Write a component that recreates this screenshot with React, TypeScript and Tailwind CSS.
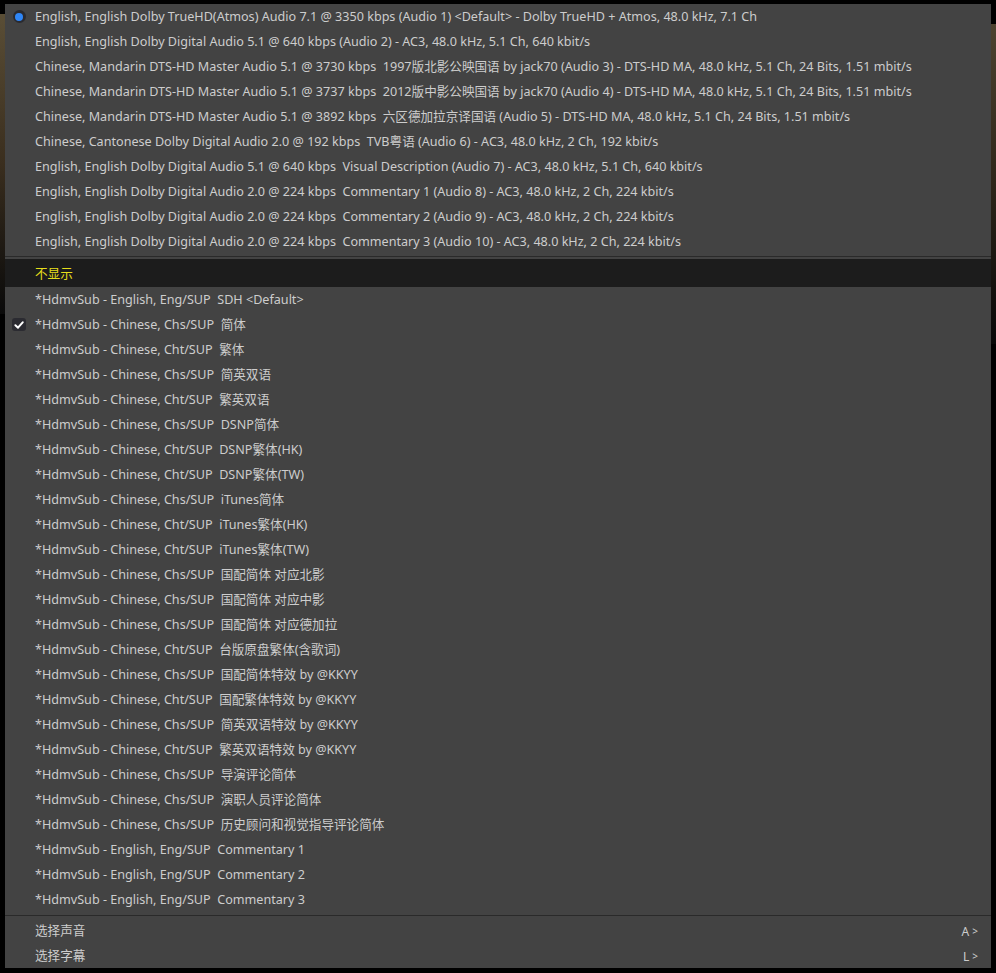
import React from "react";

type Track = {
  label: string;
  selected?: boolean;
};

const audioTracks: Track[] = [
  { label: "English, English Dolby TrueHD(Atmos) Audio 7.1 @ 3350 kbps (Audio 1) <Default> - Dolby TrueHD + Atmos, 48.0 kHz, 7.1 Ch", selected: true },
  { label: "English, English Dolby Digital Audio 5.1 @ 640 kbps (Audio 2) - AC3, 48.0 kHz, 5.1 Ch, 640 kbit/s" },
  { label: "Chinese, Mandarin DTS-HD Master Audio 5.1 @ 3730 kbps  1997版北影公映国语 by jack70 (Audio 3) - DTS-HD MA, 48.0 kHz, 5.1 Ch, 24 Bits, 1.51 mbit/s" },
  { label: "Chinese, Mandarin DTS-HD Master Audio 5.1 @ 3737 kbps  2012版中影公映国语 by jack70 (Audio 4) - DTS-HD MA, 48.0 kHz, 5.1 Ch, 24 Bits, 1.51 mbit/s" },
  { label: "Chinese, Mandarin DTS-HD Master Audio 5.1 @ 3892 kbps  六区德加拉京译国语 (Audio 5) - DTS-HD MA, 48.0 kHz, 5.1 Ch, 24 Bits, 1.51 mbit/s" },
  { label: "Chinese, Cantonese Dolby Digital Audio 2.0 @ 192 kbps  TVB粤语 (Audio 6) - AC3, 48.0 kHz, 2 Ch, 192 kbit/s" },
  { label: "English, English Dolby Digital Audio 5.1 @ 640 kbps  Visual Description (Audio 7) - AC3, 48.0 kHz, 5.1 Ch, 640 kbit/s" },
  { label: "English, English Dolby Digital Audio 2.0 @ 224 kbps  Commentary 1 (Audio 8) - AC3, 48.0 kHz, 2 Ch, 224 kbit/s" },
  { label: "English, English Dolby Digital Audio 2.0 @ 224 kbps  Commentary 2 (Audio 9) - AC3, 48.0 kHz, 2 Ch, 224 kbit/s" },
  { label: "English, English Dolby Digital Audio 2.0 @ 224 kbps  Commentary 3 (Audio 10) - AC3, 48.0 kHz, 2 Ch, 224 kbit/s" },
];

const subtitleTracks: Track[] = [
  { label: "*HdmvSub - English, Eng/SUP  SDH <Default>" },
  { label: "*HdmvSub - Chinese, Chs/SUP  简体", selected: true },
  { label: "*HdmvSub - Chinese, Cht/SUP  繁体" },
  { label: "*HdmvSub - Chinese, Chs/SUP  简英双语" },
  { label: "*HdmvSub - Chinese, Cht/SUP  繁英双语" },
  { label: "*HdmvSub - Chinese, Chs/SUP  DSNP简体" },
  { label: "*HdmvSub - Chinese, Cht/SUP  DSNP繁体(HK)" },
  { label: "*HdmvSub - Chinese, Cht/SUP  DSNP繁体(TW)" },
  { label: "*HdmvSub - Chinese, Chs/SUP  iTunes简体" },
  { label: "*HdmvSub - Chinese, Cht/SUP  iTunes繁体(HK)" },
  { label: "*HdmvSub - Chinese, Cht/SUP  iTunes繁体(TW)" },
  { label: "*HdmvSub - Chinese, Chs/SUP  国配简体 对应北影" },
  { label: "*HdmvSub - Chinese, Chs/SUP  国配简体 对应中影" },
  { label: "*HdmvSub - Chinese, Chs/SUP  国配简体 对应德加拉" },
  { label: "*HdmvSub - Chinese, Cht/SUP  台版原盘繁体(含歌词)" },
  { label: "*HdmvSub - Chinese, Chs/SUP  国配简体特效 by @KKYY" },
  { label: "*HdmvSub - Chinese, Cht/SUP  国配繁体特效 by @KKYY" },
  { label: "*HdmvSub - Chinese, Chs/SUP  简英双语特效 by @KKYY" },
  { label: "*HdmvSub - Chinese, Cht/SUP  繁英双语特效 by @KKYY" },
  { label: "*HdmvSub - Chinese, Chs/SUP  导演评论简体" },
  { label: "*HdmvSub - Chinese, Chs/SUP  演职人员评论简体" },
  { label: "*HdmvSub - Chinese, Chs/SUP  历史顾问和视觉指导评论简体" },
  { label: "*HdmvSub - English, Eng/SUP  Commentary 1" },
  { label: "*HdmvSub - English, Eng/SUP  Commentary 2" },
  { label: "*HdmvSub - English, Eng/SUP  Commentary 3" },
];

// selected audio track marker
const RadioDot = () => (
  <span className="w-[13px] h-[13px] rounded-full bg-[#2a2a2f] flex items-center justify-center">
    <span className="w-[8px] h-[8px] rounded-full bg-[#2f86f6]" />
  </span>
);

// selected subtitle marker
const CheckBox = () => (
  <span className="w-[14px] h-[13px] rounded-[3px] bg-[#2b2b31] flex items-center justify-center">
    <svg width="10" height="10" viewBox="0 0 10 10">
      <path d="M1.4 5.3 L4 7.7 L8.7 2.3" fill="none" stroke="#ffffff" strokeWidth="2" strokeLinecap="round" strokeLinejoin="round" />
    </svg>
  </span>
);

const MenuRow = ({ track, kind }: { track: Track; kind: "radio" | "check" }) => (
  <div className="h-[25px] flex items-center">
    <div className="w-[28px] flex items-center justify-center">
      {track.selected && (kind === "radio" ? <RadioDot /> : <CheckBox />)}
    </div>
    <span className="ml-[2px] pt-[2px] whitespace-pre text-[12.6px] text-[#cdcdcd]">{track.label}</span>
  </div>
);

const Separator = ({ h }: { h: string }) => (
  <div className={`${h} flex items-center`}>
    <div className="w-full h-px bg-[#2a2a2a]" />
  </div>
);

const ShortcutRow = ({ label, shortcut }: { label: string; shortcut: string }) => (
  <div className="h-[25px] flex items-center pl-[30px] pr-[13px] pt-[2px]">
    <span className="text-[12.6px] text-[#cdcdcd] flex-1">{label}</span>
    <span className="text-[12px] text-[#cdcdcd] flex items-center gap-[3px]">
      {shortcut}
      <span className="text-[10px]">&gt;</span>
    </span>
  </div>
);

export default function App() {
  return (
    <div
      className="w-[996px] h-[973px] overflow-hidden bg-black pt-[4px] pl-[5px]"
      style={{ fontFamily: '"Noto Sans", "Noto Sans CJK SC", sans-serif' }}
    >
      <div className="relative w-[986px]">
        {/* video frame peeking out at the edges */}
        <div className="absolute -left-[5px] top-[10px] w-[5px] h-[300px] bg-gradient-to-b from-[#5a4e36] via-[#3a2e1e] to-[#0a0a0a]" />
        <div className="absolute -right-[5px] top-[20px] w-[5px] h-[320px] bg-gradient-to-b from-[#4d4330] via-[#2e261a] to-[#080808]" />

        <div className="relative bg-[#434343]">
          {audioTracks.map((t, i) => (
            <MenuRow key={`a${i}`} track={t} kind="radio" />
          ))}

          <Separator h="h-[5px]" />

          <div className="h-[28px] flex items-center bg-[#1c1c1c] pl-[30px] pt-[3px]">
            <span className="text-[12.6px] text-[#e6df1b]">不显示</span>
          </div>

          {subtitleTracks.map((t, i) => (
            <MenuRow key={`s${i}`} track={t} kind="check" />
          ))}

          <Separator h="h-[6px]" />

          <ShortcutRow label="选择声音" shortcut="A" />
          <ShortcutRow label="选择字幕" shortcut="L" />
        </div>
      </div>
    </div>
  );
}
